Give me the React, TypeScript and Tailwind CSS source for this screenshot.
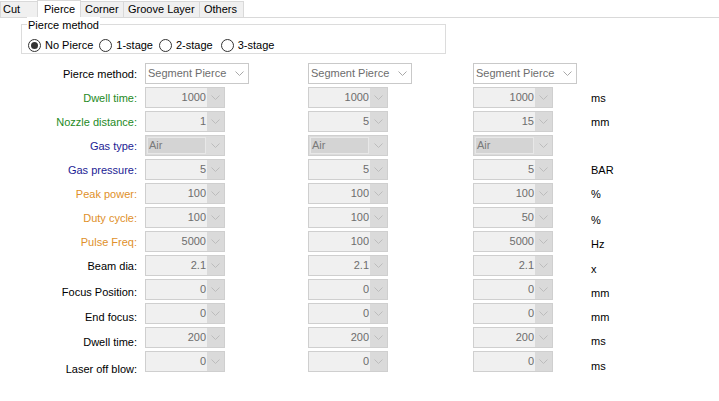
import React from 'react';

type Row = {
  label: string;
  color: string;
  kind: 'combo' | 'num' | 'gas';
  values: string[];
  unit?: string;
  labelShift?: string;
  unitShift?: string;
};

const rows: Row[] = [
  { label: 'Pierce method:', color: 'text-black', kind: 'combo', values: ['Segment Pierce', 'Segment Pierce', 'Segment Pierce'] },
  { label: 'Dwell time:', color: 'text-[#1e8a1e]', kind: 'num', values: ['1000', '1000', '1000'], unit: 'ms' },
  { label: 'Nozzle distance:', color: 'text-[#1e8a1e]', kind: 'num', values: ['1', '5', '15'], unit: 'mm' },
  { label: 'Gas type:', color: 'text-[#1c1c94]', kind: 'gas', values: ['Air', 'Air', 'Air'] },
  { label: 'Gas pressure:', color: 'text-[#1c1c94]', kind: 'num', values: ['5', '5', '5'], unit: 'BAR' },
  { label: 'Peak power:', color: 'text-[#e0902a]', kind: 'num', values: ['100', '100', '100'], unit: '%' },
  { label: 'Duty cycle:', color: 'text-[#e0902a]', kind: 'num', values: ['100', '100', '50'], unit: '%', unitShift: 'mt-[5px]' },
  { label: 'Pulse Freq:', color: 'text-[#e0902a]', kind: 'num', values: ['5000', '100', '5000'], unit: 'Hz', unitShift: 'mt-[5px]' },
  { label: 'Beam dia:', color: 'text-black', kind: 'num', values: ['2.1', '2.1', '2.1'], unit: 'x', unitShift: 'mt-[6px]' },
  { label: 'Focus Position:', color: 'text-black', kind: 'num', values: ['0', '0', '0'], unit: 'mm', unitShift: 'mt-[6px]', labelShift: 'mt-[5px]' },
  { label: 'End focus:', color: 'text-black', kind: 'num', values: ['0', '0', '0'], unit: 'mm', unitShift: 'mt-[6px]', labelShift: 'mt-[6px]' },
  { label: 'Dwell time:', color: 'text-black', kind: 'num', values: ['200', '200', '200'], unit: 'ms', unitShift: 'mt-[6px]', labelShift: 'mt-[7px]' },
  { label: 'Laser off blow:', color: 'text-black', kind: 'num', values: ['0', '0', '0'], unit: 'ms', unitShift: 'mt-[7px]', labelShift: 'mt-[10px]' },
];

const Chevron = ({ color }: { color: string }) => (
  <svg width="9" height="5" viewBox="0 0 9 5" className="block">
    <path d="M0.5 0.5 L4.5 4.5 L8.5 0.5" fill="none" stroke={color} strokeWidth="1" />
  </svg>
);

const Combo = ({ value }: { value: string }) => (
  <div className="w-[104px] h-[21px] border border-[#c9c9c9] bg-white flex items-center">
    <span className="flex-1 pl-[2px] text-[#6d6d6d] whitespace-nowrap">{value}</span>
    <span className="w-[17px] flex justify-center">
      <Chevron color="#a8a8a8" />
    </span>
  </div>
);

const NumBox = ({ value }: { value: string }) => (
  <div className="w-[80px] h-[21px] border border-[#cfcfcf] bg-[#f0f0f0] flex">
    <span className="flex-1 text-right pr-[1px] text-[#6d6d6d] leading-[19px]">{value}</span>
    <span className="w-[17px] bg-[#dadada] flex items-center justify-center">
      <Chevron color="#bcbcbc" />
    </span>
  </div>
);

const GasBox = ({ value }: { value: string }) => (
  <div className="w-[80px] h-[21px] border border-[#cfcfcf] bg-[#dcdcdc] flex">
    <span className="flex-1 m-[1px] border border-[#e8e8e8] bg-[#d4d4d4] pl-[1px] text-[#7a7a7a] leading-[15px]">{value}</span>
    <span className="w-[17px] flex items-center justify-center">
      <Chevron color="#bcbcbc" />
    </span>
  </div>
);

const Radio = ({ label, checked, gap }: { label: string; checked?: boolean; gap: string }) => (
  <label className={`flex items-center gap-[4px] ${gap}`}>
    <span className="w-[13px] h-[13px] rounded-full border border-[#333333] bg-white flex items-center justify-center">
      {checked && <span className="w-[7px] h-[7px] rounded-full bg-[#333333]" />}
    </span>
    <span>{label}</span>
  </label>
);

const tabs = [
  { name: 'Cut', w: 'w-[38px]' },
  { name: 'Pierce', w: 'w-[44px]' },
  { name: 'Corner', w: 'w-[44px]' },
  { name: 'Groove Layer', w: 'w-[77px]' },
  { name: 'Others', w: 'w-[45px]' },
];

export default function App() {
  return (
    <div className="w-[719px] h-[401px] bg-white text-[11px] text-black overflow-hidden" style={{ fontFamily: '"Liberation Sans", "DejaVu Sans", sans-serif' }}>
      {/* tab strip */}
      <div className="flex items-end h-[18px] border-b border-[#d9d9d9]">
        {tabs.map((t) =>
          t.name === 'Pierce' ? (
            <div key={t.name} className={`${t.w} h-[18px] pl-[6px] bg-white border-x border-t border-[#d9d9d9] -mb-px -ml-px pt-[1px] leading-[15px] relative`}>
              {t.name}
            </div>
          ) : (
            <div key={t.name} className={`${t.w} h-[16px] pl-[4px] bg-[#f0f0f0] border-x border-t border-[#d9d9d9] leading-[14px] -ml-px first:ml-0 first:pl-[2px]`}>
              {t.name}
            </div>
          )
        )}
      </div>

      {/* pierce method group */}
      <div className="ml-[21px] mt-[6px] w-[425px] h-[30px] border border-[#dcdcdc] relative">
        <span className="absolute left-[5px] top-[-8px] bg-white px-[1px]">Pierce method</span>
        <div className="flex items-center pl-[6px] pt-[12px]">
          <Radio label="No Pierce" checked gap="mr-[6px]" />
          <Radio label="1-stage" gap="mr-[6px]" />
          <Radio label="2-stage" gap="mr-[8px]" />
          <Radio label="3-stage" gap="" />
        </div>
      </div>

      {/* parameters */}
      <div className="mt-[9px]">
        {rows.map((r, i) => (
          <div key={i} className="flex h-[24px] items-start">
            <div className={`w-[137px] text-right whitespace-nowrap ${r.color} ${r.labelShift ?? 'mt-[3px]'}`}>{r.label}</div>
            <div className="w-[8px]" />
            {r.values.map((v, j) => (
              <div key={j} className={j === 0 ? 'w-[163px]' : j === 1 ? 'w-[165px]' : 'w-[118px]'}>
                {r.kind === 'combo' ? <Combo value={v} /> : r.kind === 'gas' ? <GasBox value={v} /> : <NumBox value={v} />}
              </div>
            ))}
            {r.unit && <div className={`whitespace-nowrap ${r.unitShift ?? 'mt-[3px]'}`}>{r.unit}</div>}
          </div>
        ))}
      </div>
    </div>
  );
}
